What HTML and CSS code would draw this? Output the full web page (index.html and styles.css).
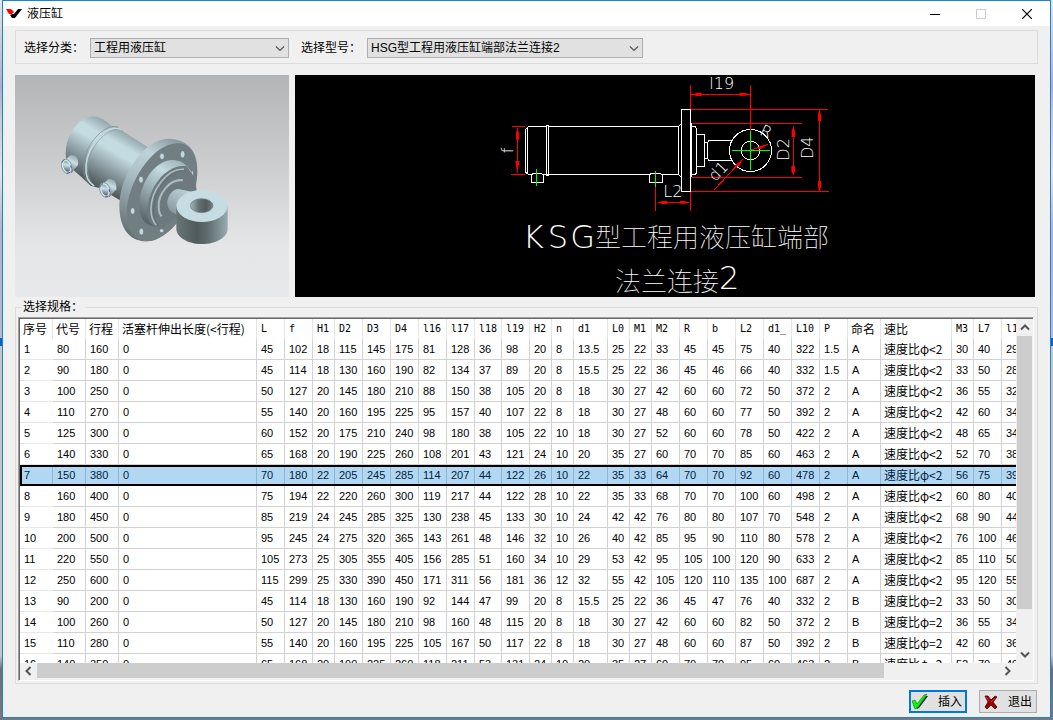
FILE: index.html
```html
<!DOCTYPE html>
<html lang="zh-CN">
<head>
<meta charset="utf-8">
<title>液压缸</title>
<link rel="stylesheet" href="styles.css">
</head>
<body>
<main class="window">
  <header class="titlebar">
    <svg class="app-icon" width="16" height="10" viewBox="0 0 16 10" aria-hidden="true">
      <path d="M0 0h5l3 3-2 2H3z" fill="#f00"/>
      <path d="M4 6l2-1 2 0 4-5h4L9 9H6z" fill="#000"/>
    </svg>
    <h1 class="title">液压缸</h1>
    <div class="caption-buttons">
      <button class="caption" type="button" aria-label="最小化"><svg width="10" height="10" viewBox="0 0 10 10"><path d="M0 5.5h10" stroke="#000"/></svg></button>
      <button class="caption" type="button" aria-label="最大化" disabled><svg width="10" height="10" viewBox="0 0 10 10"><path d="M.5.5h9v9h-9z" fill="none" stroke="#ccc"/></svg></button>
      <button class="caption" type="button" aria-label="关闭"><svg width="10" height="10" viewBox="0 0 10 10"><path d="M0 0l10 10M10 0L0 10" stroke="#000" stroke-width="1.2"/></svg></button>
    </div>
  </header>

  <div class="content">
    <section class="filters">
      <label class="label" for="category">选择分类：</label>
      <div class="combo combo-category">
        <select id="category"><option>工程用液压缸</option></select>
        <svg class="chevron" width="10" height="6" viewBox="0 0 10 6" aria-hidden="true"><path d="M1 .5l4 4 4-4" fill="none" stroke="#555" stroke-width="1.2"/></svg>
      </div>
      <label class="label" for="model">选择型号：</label>
      <div class="combo combo-model">
        <select id="model"><option>HSG型工程用液压缸端部法兰连接2</option></select>
        <svg class="chevron" width="10" height="6" viewBox="0 0 10 6" aria-hidden="true"><path d="M1 .5l4 4 4-4" fill="none" stroke="#555" stroke-width="1.2"/></svg>
      </div>
    </section>

    <section class="previews">
      <svg class="model-view" viewBox="15 15 822 666" preserveAspectRatio="none" role="img" aria-label="液压缸三维模型">
        <defs>
          <linearGradient id="sky" x1="0" y1="0" x2="0" y2="1"><stop offset="0" stop-color="#b3b4b6"/><stop offset=".5" stop-color="#d2d3d4"/><stop offset=".76" stop-color="#e4e5e7"/><stop offset="1" stop-color="#e7e9ea"/></linearGradient>
          <linearGradient id="barrel" gradientUnits="userSpaceOnUse" x1="335" y1="178" x2="238" y2="345"><stop offset="0" stop-color="#8fa2a7"/><stop offset=".22" stop-color="#c4dbe1"/><stop offset=".36" stop-color="#c4dbe1"/><stop offset=".7" stop-color="#7f9094"/><stop offset="1" stop-color="#465052"/></linearGradient>
          <linearGradient id="rim" gradientUnits="userSpaceOnUse" x1="500" y1="215" x2="345" y2="480"><stop offset="0" stop-color="#8d9da1"/><stop offset=".22" stop-color="#bdd3d9"/><stop offset=".45" stop-color="#aec3c9"/><stop offset=".8" stop-color="#839296"/><stop offset="1" stop-color="#667376"/></linearGradient>
          <linearGradient id="hub" gradientUnits="userSpaceOnUse" x1="520" y1="275" x2="405" y2="460"><stop offset="0" stop-color="#9eb1b6"/><stop offset=".25" stop-color="#c4dbe1"/><stop offset=".6" stop-color="#94a6ab"/><stop offset="1" stop-color="#566164"/></linearGradient>
          <linearGradient id="port" x1=".7" y1="0" x2=".4" y2="1"><stop offset="0" stop-color="#91a4a9"/><stop offset=".4" stop-color="#c9e0e6"/><stop offset="1" stop-color="#566265"/></linearGradient>
          <linearGradient id="eye"><stop offset="0" stop-color="#687577"/><stop offset=".4" stop-color="#505a5c"/><stop offset=".65" stop-color="#657174"/><stop offset="1" stop-color="#98abb0"/></linearGradient>
          <linearGradient id="bore"><stop offset="0" stop-color="#a3b6bb"/><stop offset=".4" stop-color="#616d70"/><stop offset=".7" stop-color="#515b5d"/><stop offset="1" stop-color="#748286"/></linearGradient>
        </defs>
        <path d="M15 15h822v666H15z" fill="url(#sky)"/>
        <path d="M252 139C205 139 162 200 168 262C170 285 190 300 215 322L242 347L268 354L335 394L418 234L338 184L322 170L306 169Q276 141 252 139Z" fill="url(#barrel)"/>
        <path d="M334 180C295 155 232 225 228 288C226 318 235 338 252 347" fill="none" stroke="#c2d9df" stroke-width="5"/>
        <path d="M324 171C281 158 219 231 220 292C221 320 231 339 243 347" fill="none" stroke="#7b8d92" stroke-width="2"/>
        <path d="M338 184C301 160 237 227 233 289C231 318 240 338 255 348" fill="none" stroke="#8b9ea3" stroke-width="2"/>
        <path d="M168 268L182 255C198 254 207 264 204 285L184 310Z" fill="url(#port)"/>
        <ellipse cx="170" cy="289" rx="15" ry="22" transform="rotate(-18 170 289)" fill="#d2e9ef" stroke="#8ea1a6" stroke-width="3"/>
        <ellipse cx="170" cy="289" rx="10" ry="17" transform="rotate(-18 170 289)" fill="url(#port)"/>
        <path d="M156 278q3-8 8-9M170 310l10-3M182 286l2 9" stroke="#3867c0" stroke-width="3" fill="none"/>
        <path d="M282 339L296 327C313 326 321 338 319 358L298 382Z" fill="url(#port)"/>
        <ellipse cx="285" cy="360" rx="15" ry="22" transform="rotate(-18 285 360)" fill="#d2e9ef" stroke="#8ea1a6" stroke-width="3"/>
        <ellipse cx="285" cy="360" rx="10" ry="17" transform="rotate(-18 285 360)" fill="url(#port)"/>
        <path d="M271 350q3-8 8-9M285 381l10-3M297 357l2 9" stroke="#3867c0" stroke-width="3" fill="none"/>
        <path d="M475 206C525 207 563 235 562 300C560 400 480 514 410 514C350 514 328 465 328 405C329 315 405 206 475 206Z" fill="url(#rim)"/>
        <path d="M507 220C545 222 563 260 562 310C560 400 480 514 410 514C368 512 350 475 350 430C350 340 430 215 507 220Z" fill="#717f82"/>
        <g fill="#c4d9de" stroke="#5f6c6f" stroke-width="2">
          <ellipse cx="456" cy="259" rx="7" ry="10"/><ellipse cx="518" cy="253" rx="7" ry="11"/><ellipse cx="548" cy="310" rx="3" ry="9"/><ellipse cx="393" cy="329" rx="7" ry="10"/><ellipse cx="368" cy="423" rx="7" ry="10"/><ellipse cx="394" cy="485" rx="7" ry="10"/><ellipse cx="455" cy="482" rx="7" ry="6"/>
        </g>
        <path d="M484 270Q512 268 530 288L545 305L543 365L500 440L440 472L418 465C395 456 388 430 388 402C389 345 430 274 484 270Z" fill="url(#hub)"/>
        <path d="M530 289C474 278 412 350 412 426Q414 457 434 471L458 474L500 440L560 360L553 322Z" fill="#6d7a7d"/>
        <path d="M522 298C474 293 422 360 423 420Q424 450 439 465" fill="none" stroke="#a9bdc3" stroke-width="5"/>
        <path d="M526 303C480 296 431 360 431 423Q432 451 444 466" fill="none" stroke="#5a676a" stroke-width="2"/>
        <path d="M519 331C481 325 444 370 446 411Q446 429 455 439" fill="none" stroke="#a9bdc3" stroke-width="6"/>
        <path d="M505 357L548 366L510 445L498 433C480 426 470 412 472 394C475 374 489 357 505 357Z" fill="url(#hub)"/>
        <path d="M499 408V476C499 501 533 522 576 522S653 501 653 476V408Z" fill="url(#eye)"/>
        <ellipse cx="576" cy="408" rx="77" ry="48" fill="#c5dce2"/>
        <ellipse cx="575" cy="407" rx="34" ry="21" fill="url(#bore)" stroke="#6b797c" stroke-width="2"/>
      </svg>
      <svg class="drawing" viewBox="-585 15 2220 666" role="img" aria-label="HSG型工程用液压缸端部法兰连接2 图纸">
        <g fill="none" stroke="#fff" stroke-width="3" shape-rendering="crispEdges">
          <path d="M115 169.500H167M178 169.500H565M115 313.500H125M160 313.500H478M517 313.500H565M115 169.500L106.500 178V306L115 313.500M112.500 172V312M169.500 166V316H175.500V166Z"/>
          <path d="M124.500 314V337.500H160.500V314L153 310H130ZM478.500 314V337.500H517.500V314L510 310H484Z"/>
          <path d="M565.500 169V313L573 320M565.500 169L573 162M574.500 118.500H601.500V364.500H574.500ZM604.500 160V322M604.500 169.500H615L619.500 175V310L615 313.500H604M619.500 193.500H643.500V289.500H619.500M643.500 217.500H652.500V265.500H643.500M652.500 217L657 211.500H724M652.500 265L657 271.500H727"/>
          <circle cx="781.500" cy="241.500" r="63"/><circle cx="781.500" cy="241.500" r="28"/>
        </g>
        <g stroke="#f00" stroke-width="3" fill="none" shape-rendering="crispEdges">
          <path d="M66 169.500H105M63 313.500H105M82.500 174V309M601.500 45V118M781.500 45V182M604 73.500H780M603 118.500H1014M603 364.500H1017M606 160.500H936M606 322.500H936M910.500 168V315M988.500 120V363M496.500 350V423M601.500 365V423M504 397.500H597"/>
          <path d="M672 360L758 268M781 241L834 223"/>
        </g>
        <path fill="#f00" d="M82 174l5 15v20h-9v-20zM82 309l7-36H76zM604 73l14-3 2-2h15v10h-15zM779 73l-14-4h-17v8h17zM504 397l13-4h14v9h-14zM597 397l-13-4h-14v8h14zM910 168l5 16v17h-10v-17zM910 315l5-11v-16h-11v16zM988 119l5 15v19h-9v-19zM988 364l5-14v-17h-9v17zM758 268l-8 18-12 6-4-6zM834 223l-22 14-9-1 4-7z"/>
        <g stroke="#0f0" stroke-width="3" shape-rendering="crispEdges"><path d="M139.500 297V348M496.500 303V351M726 241.500H840M781.500 184V300"/></g>
        <g class="dimension">
          <text x="658" y="58">l19</text>
          <text x="520" y="382">L2</text>
          <text transform="translate(70 250) rotate(-90)">f</text>
          <text transform="translate(896 272) rotate(-90)">D2</text>
          <text transform="translate(970 267) rotate(-90)">D4</text>
          <text transform="translate(676 337) rotate(-47)">d1</text>
          <text transform="translate(806 193) rotate(25)">R</text>
        </g>
        <text class="caption-latin" x="98 173 241" y="533">KSG</text>
        <text class="caption-cjk" x="315" y="532">型工程用液压缸端部</text>
        <text class="caption-cjk" x="375" y="662">法兰连接</text>
        <text class="caption-latin" x="687" y="658">2</text>
      </svg>
    </section>

    <fieldset class="spec">
      <legend class="label">选择规格：</legend>
      <div class="grid">
        <div class="grid-view">
          <table class="grid-table">
            <colgroup id="cols"></colgroup>
            <thead><tr id="head"></tr></thead>
            <tbody id="rows"></tbody>
          </table>
        </div>
        <div class="vbar">
          <button type="button" class="arrow" aria-label="向上"><svg width="10" height="7" viewBox="0 0 10 7"><path d="M1 5.500l4-4 4 4" fill="none" stroke="#555" stroke-width="2"/></svg></button>
          <div class="vtrack"><div class="vthumb"></div></div>
          <button type="button" class="arrow" aria-label="向下"><svg width="10" height="7" viewBox="0 0 10 7"><path d="M1 1.500l4 4 4-4" fill="none" stroke="#555" stroke-width="2"/></svg></button>
        </div>
        <div class="hbar">
          <button type="button" class="arrow" aria-label="向左"><svg width="7" height="10" viewBox="0 0 7 10"><path d="M5.500 1l-4 4 4 4" fill="none" stroke="#555" stroke-width="2"/></svg></button>
          <div class="htrack"><div class="hthumb"></div></div>
          <button type="button" class="arrow" aria-label="向右"><svg width="7" height="10" viewBox="0 0 7 10"><path d="M1.500 1l4 4-4 4" fill="none" stroke="#555" stroke-width="2"/></svg></button>
        </div>
      </div>
    </fieldset>

    <footer class="actions">
      <button type="button" class="action action-default">
        <svg width="16" height="16" viewBox="0 0 16 16" aria-hidden="true"><path d="M1 9l4 6 2-1 9-12-2 0-8 11z" fill="#222"/><path d="M0 7l3-1 2 4L12 1l3-1-9 13-3 2z" fill="#0f0" stroke="#087808" stroke-width=".6"/></svg>
        <span>插入</span>
      </button>
      <button type="button" class="action">
        <svg width="14" height="14" viewBox="0 0 14 14" aria-hidden="true"><path d="M1 1h3l3 4 4-4 2 1-4 5 4 5-2 2-4-4-4 4-2-2 3-5z" fill="#900" stroke="#500" stroke-width=".8"/><path d="M2 2l3 4M11 3L7 7" stroke="#e22" stroke-width="1"/></svg>
        <span>退出</span>
      </button>
    </footer>
  </div>
</main>
<script src="script.js"></script>
</body>
</html>
```
FILE: styles.css
```css
* { box-sizing: border-box; }
body {
  margin: 0;
  padding: 0 2px 2px;
  background: linear-gradient(to bottom, #e4e6ea, #a9b0cc 12%, #c5c8d6 16%, #e2e4e8 24%, #aeb4cc 32%, #b4bad0 47%, #0a63c8 47%, #0a63c8 48%, #c4c6ca 48%, #c4c6ca 91%, #6c6f78 93%, #77797e);
  font: 12px/16px "Liberation Sans Narrow", "Liberation Sans", "Noto Sans CJK SC", sans-serif;
  color: #000;
}
.window {
  display: flex;
  flex-direction: column;
  height: calc(100vh - 2px);
  border: 1px solid #1883d7;
  background: #f0f0f0;
}
.titlebar {
  display: flex;
  align-items: center;
  height: 25px;
  padding-left: 3px;
  background: #fff;
}
.title { margin: 0 0 0 5px; font-size: 12px; font-weight: 400; }
.caption-buttons { display: flex; margin-left: auto; }
.caption {
  display: grid;
  place-items: center;
  width: 46px;
  height: 24px;
  padding: 0;
  border: 0;
  background: none;
}
.content {
  display: flex;
  flex: 1;
  flex-direction: column;
  min-height: 0;
  padding: 4px 12px 4px;
}
.filters {
  display: flex;
  align-items: center;
  height: 34px;
  padding: 2px 0 0 8px;
  border: 1px solid #dcdcdc;
}
.label { line-height: 16px; white-space: nowrap; }
.combo { position: relative; height: 20px; }
.combo-category { width: 199px; margin: 0 12px 0 6px; }
.combo-model { width: 276px; margin-left: 6px; }
.combo select {
  width: 100%;
  height: 20px;
  padding: 0 3px;
  border: 1px solid #adadad;
  border-radius: 0;
  background: #e1e1e1;
  color: #000;
  font: inherit;
  appearance: none;
}
.chevron { position: absolute; top: 8px; right: 4px; pointer-events: none; }
.previews {
  display: flex;
  gap: 6px;
  height: 222px;
  margin: 11px 3px 0 0;
}
.model-view { flex: none; width: 274px; height: 222px; }
.drawing { flex: 1; min-width: 0; height: 222px; background: #000; }
.dimension {
  fill: #fff;
  font-family: "DejaVu Sans", sans-serif;
  font-weight: 200;
  font-size: 48px;
}
.caption-latin {
  fill: #fff;
  font-family: "DejaVu Sans", sans-serif;
  font-weight: 200;
  font-size: 96px;
}
.caption-cjk {
  fill: #fff;
  font-family: "Noto Sans CJK SC", sans-serif;
  font-weight: 100;
  font-size: 78px;
}
.spec {
  display: flex;
  flex: 1;
  flex-direction: column;
  min-width: 0;
  min-height: 0;
  margin: 2px 0 0;
  padding: 2px 3px 2px 2px;
  border: 1px solid #dcdcdc;
}
.spec legend { margin-left: 3px; padding: 0 2px; }
.grid {
  display: grid;
  flex: 1;
  grid-template: minmax(0, 1fr) 16px / minmax(0, 1fr) 16px;
  min-height: 0;
  border: 1px solid;
  border-color: #a0a0a0 #fff #fff #a0a0a0;
  box-shadow: inset 1px 1px #696969;
  padding: 1px;
}
.grid-view { overflow: hidden; background: #fff; }
.grid-table {
  width: 1012px;
  table-layout: fixed;
  border-spacing: 0;
}
.grid-table th, .grid-table td {
  overflow: hidden;
  padding: 0 0 0 4px;
  border-right: 1px solid #d2d2d2;
  text-align: left;
  font-weight: 400;
  white-space: nowrap;
}
.grid-table th {
  height: 20px;
  border-right-color: #e5e5e5;
  font-size: 10px;
  line-height: 18px;
  font-family: "DejaVu Sans Mono", monospace;
}
.grid-table th.cjk, .grid-table td.cjk {
  padding-left: 3px;
  font-size: 12px;
  font-family: "Noto Sans CJK SC", sans-serif;
}
.grid-table td {
  height: 21px;
  padding-bottom: 1px;
  border-bottom: 1px solid #d2d2d2;
  font-size: 11px;
  line-height: 18px;
  font-family: "Liberation Sans", sans-serif;
}
.grid-table td:first-child {
  border-right-color: transparent;
  border-bottom-color: #e8e8e8;
}
.grid-table .selected {
  outline: 2px solid #000;
  outline-offset: -2px;
  color: #00233f;
  background: #b2d7f2;
}
.grid-table .selected td { border-right-color: #8fb6d3; border-bottom-color: #000; }
.vbar { display: flex; flex-direction: column; padding-left: 1px; }
.hbar { display: flex; grid-column: 1 / 2; }
.arrow {
  display: grid;
  flex: none;
  place-items: center;
  width: 16px;
  height: 17px;
  padding: 0;
  border: 0;
  background: none;
}
.hbar .arrow { width: 17px; height: 16px; }
.vtrack, .htrack { flex: 1; }
.vthumb { width: 15px; height: 88%; background: #cdcdcd; }
.hthumb { width: 88%; height: 15px; background: #cdcdcd; }
.actions {
  display: flex;
  justify-content: flex-end;
  gap: 12px;
  padding: 6px 1px 0 0;
}
.action {
  display: flex;
  align-items: center;
  justify-content: space-between;
  width: 58px;
  height: 23px;
  padding: 0 4px;
  border: 1px solid #adadad;
  background: #e1e1e1;
  color: #000;
  font: inherit;
}
.action-default { padding: 0 3px 0 1px; border: 2px solid #0078d7; }
```
FILE: script.js
```js
const columns = [
  ['序号', 33], ['代号', 33], ['行程', 33], ['活塞杆伸出长度(<行程)', 138],
  ['L', 28], ['f', 28], ['H1', 22], ['D2', 28], ['D3', 28], ['D4', 28],
  ['l16', 28], ['l17', 28], ['l18', 27], ['l19', 28], ['H2', 22], ['n', 22],
  ['d1', 34], ['L0', 22], ['M1', 22], ['M2', 28], ['R', 28], ['b', 28],
  ['L2', 28], ['d1_', 28], ['L10', 28], ['P', 28], ['命名', 33],
  ['速比', 71], ['M3', 22], ['L7', 28], ['l1', 30]
];

const rows = `
80 160 0 45 102 18 115 145 175 81 128 36 98 20 8 13.5 25 22 33 45 45 75 40 322 1.5 A 速度比φ<2 30 40 29
90 180 0 45 114 18 130 160 190 82 134 37 89 20 8 15.5 25 22 36 45 46 66 40 332 1.5 A 速度比φ<2 33 50 28
100 250 0 50 127 20 145 180 210 88 150 38 105 20 8 18 30 27 42 60 60 72 50 372 2 A 速度比φ<2 36 55 32
110 270 0 55 140 20 160 195 225 95 157 40 107 22 8 18 30 27 48 60 60 77 50 392 2 A 速度比φ<2 42 60 34
125 300 0 60 152 20 175 210 240 98 180 38 105 22 10 18 30 27 52 60 60 78 50 422 2 A 速度比φ<2 48 65 34
140 330 0 65 168 20 190 225 260 108 201 43 121 24 10 20 35 27 60 70 70 85 60 463 2 A 速度比φ<2 52 70 38
150 380 0 70 180 22 205 245 285 114 207 44 122 26 10 22 35 33 64 70 70 92 60 478 2 A 速度比φ<2 56 75 39
160 400 0 75 194 22 220 260 300 119 217 44 122 28 10 22 35 33 68 70 70 100 60 498 2 A 速度比φ<2 60 80 40
180 450 0 85 219 24 245 285 325 130 238 45 133 30 10 24 42 42 76 80 80 107 70 548 2 A 速度比φ<2 68 90 44
200 500 0 95 245 24 275 320 365 143 261 48 146 32 10 26 40 42 85 95 90 110 80 578 2 A 速度比φ<2 76 100 46
220 550 0 105 273 25 305 355 405 156 285 51 160 34 10 29 53 42 95 105 100 120 90 633 2 A 速度比φ<2 85 110 50
250 600 0 115 299 25 330 390 450 171 311 56 181 36 12 32 55 42 105 120 110 135 100 687 2 A 速度比φ<2 95 120 55
90 200 0 45 114 18 130 160 190 92 144 47 99 20 8 15.5 25 22 36 45 47 76 40 332 2 B 速度比φ=2 33 50 30
100 260 0 50 127 20 145 180 210 98 160 48 115 20 8 18 30 27 42 60 60 82 50 372 2 B 速度比φ=2 36 55 34
110 280 0 55 140 20 160 195 225 105 167 50 117 22 8 18 30 27 48 60 60 87 50 392 2 B 速度比φ=2 42 60 36
140 350 0 65 168 20 190 225 260 118 211 53 131 24 10 20 35 27 60 70 70 95 60 463 2 B 速度比φ=2 52 70 40
`.trim().split('\n').map(line => line.split(' '));

const selectedIndex = 6;

function cell(tag, text) {
  const el = document.createElement(tag);
  el.textContent = text;
  if (/[\u4e00-\u9fff]/.test(text)) el.className = 'cjk';
  return el;
}

for (const [name, width] of columns) {
  const col = document.createElement('col');
  col.style.width = width + 'px';
  document.getElementById('cols').append(col);
  const th = cell('th', name);
  th.scope = 'col';
  document.getElementById('head').append(th);
}

rows.forEach((values, index) => {
  const tr = document.createElement('tr');
  if (index === selectedIndex) tr.className = 'selected';
  [String(index + 1), ...values].forEach(value => tr.append(cell('td', value)));
  document.getElementById('rows').append(tr);
});
```
